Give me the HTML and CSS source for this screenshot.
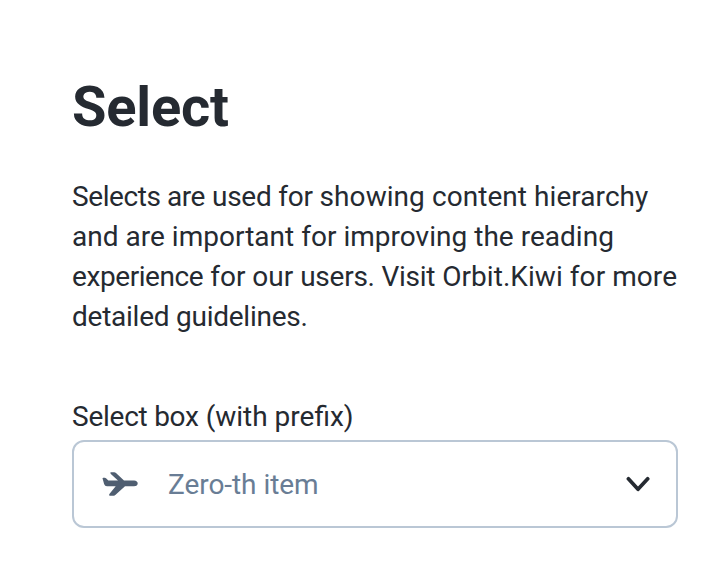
FILE: index.html
```html
<!DOCTYPE html>
<html lang="en">
<head>
<meta charset="utf-8">
<title>Select</title>
<link rel="stylesheet" href="styles.css">
</head>
<body>
<main class="page">
<h1 class="title">Select</h1>
<p class="description"><span class="tight">Selects are</span> <span class="snug">used for</span> <span class="loose">showing content hierarchy</span><br><span class="even">and are important for improving the reading</span><br><span class="tight">experience</span> for our <span class="snug">users. Visit</span> <span class="loose">Orbit.Kiwi for more</span><br><span class="snug">detailed guidelines.</span></p>
<div class="label"><span class="snug">Select box</span> (with prefix)</div>
<div class="select">
<svg class="plane" viewBox="0 0 36 26"><path d="M.5 7.3Q.5 6.7 1.2 6.7H2.7Q3.6 6.7 4.3 7.5L6.3 9.5H16L9.1 3.2Q7.3 1.3 9 1.3H12.2Q13.2 1.3 14 2L22 9.5H32Q35.7 10 35.7 12.4T32 15.3H23L13.6 23.8Q12.7 24.7 11.7 24.7H8Q6.3 24.7 7.4 23L13.7 15.3H5Q2.8 15.3 2.1 12.9Z"/></svg>
<span class="value">Zero-th item</span>
<svg class="chevron" viewBox="0 0 24 16"><path d="M2.4 2.8L12 13.3L21.7 2.8"/></svg>
</div>
</main>
</body>
</html>
```
FILE: styles.css
```css
* { box-sizing: border-box; }
body { margin: 0; background: #fff; color: #252a31; font-family: Roboto, sans-serif; }
.page { padding: 72px 40px 0 72px; }
.title { margin: 0; font-size: 56px; line-height: 70px; font-weight: 700; letter-spacing: -0.2px; }
.description { margin: 35px 0 0; font-size: 28px; line-height: 40px; white-space: nowrap; }
.tight { letter-spacing: -0.42px; }
.snug { letter-spacing: -0.25px; }
.loose { letter-spacing: 0.06px; }
.even { letter-spacing: 0.02px; }
.label { margin-top: 60px; font-size: 28px; line-height: 40px; }
.select { display: flex; align-items: center; margin-top: 3px; height: 88px; border: 2px solid #bac7d5; border-radius: 12px; padding: 0 26px 0 28px; }
.plane { width: 36px; height: 26px; fill: #4f5e71; }
.value { flex: 1; margin-left: 30px; padding-top: 2px; font-size: 28px; line-height: 40px; color: #697d95; letter-spacing: -0.05px; }
.chevron { width: 24px; height: 16px; fill: none; stroke: #252a31; stroke-width: 3.7; stroke-linecap: round; stroke-linejoin: round; }
```
